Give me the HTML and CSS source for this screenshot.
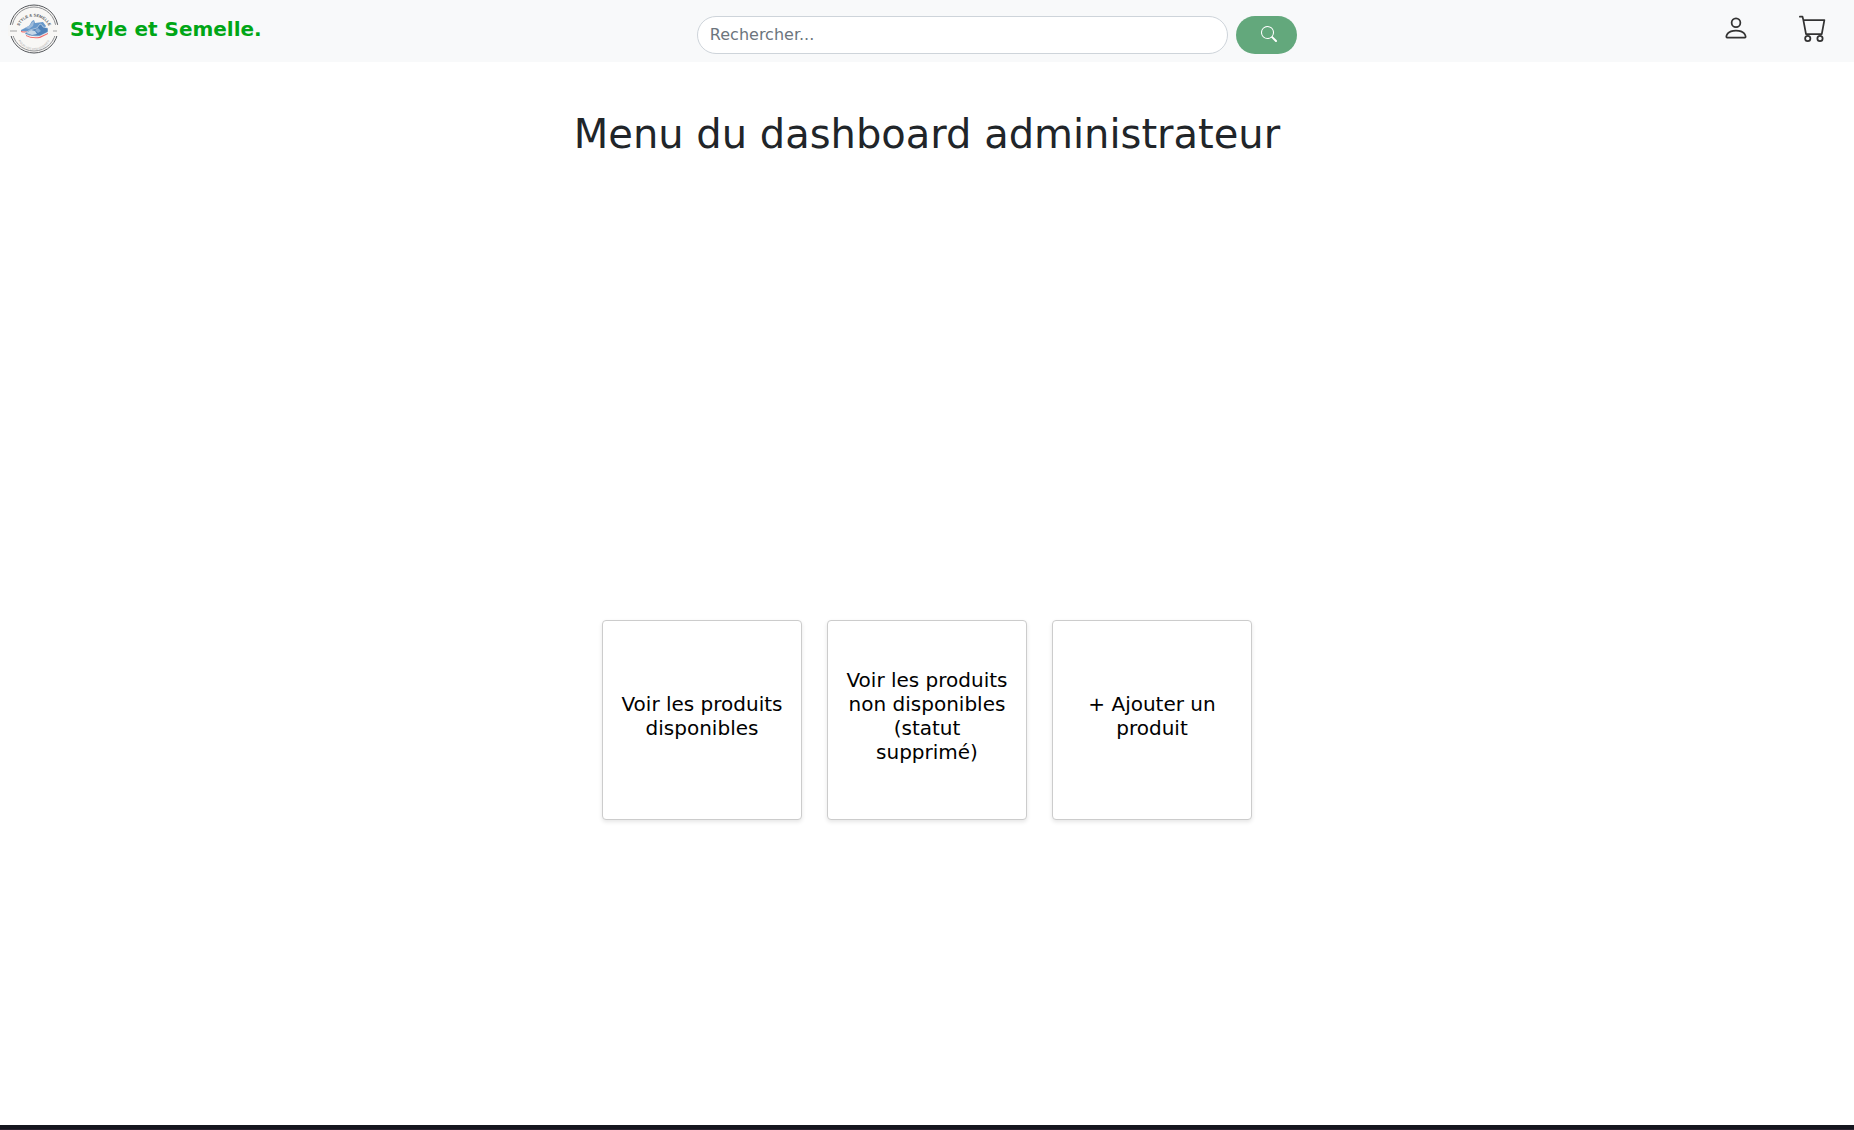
FILE: index.html
```html
<!DOCTYPE html>
<html lang="fr">
<head>
  <meta charset="utf-8">
  <meta name="viewport" content="width=device-width, initial-scale=1">
  <title>Style et Semelle</title>
  <link rel="stylesheet" href="styles.css">
</head>
<body>
  <header class="navbar">
    <a class="brand" href="#">
      <svg class="brand-logo" viewBox="0 0 52 52" aria-hidden="true">
        <circle cx="26" cy="26" r="24" fill="#f8f7f5" stroke="#55585c" stroke-width="1"/>
        <circle cx="26" cy="26" r="22" fill="none" stroke="#8e9093" stroke-width="1"/>
        <rect x="0" y="22" width="52" height="11" fill="#f8f7f5"/>
        <path id="arc-top" d="M11 24a16 16 0 0 1 30 0" fill="none"/>
        <path id="arc-bottom" d="M8 29a18 18 0 0 0 36 0" fill="none"/>
        <text class="logo-name"><textPath href="#arc-top" startOffset="50%">STYLE &amp; SEMELLE</textPath></text>
        <text class="logo-motto"><textPath href="#arc-bottom" startOffset="50%">POUR VOS CHAUSSURES</textPath></text>
        <path d="M2 28h7M45 28h4" stroke="#a5a5a5" stroke-width="1"/>
        <path d="M13 27l8-4 3-5 2-1 1 3 8-1 3 4-2 3-14 3-9-1z" fill="#6898ca"/>
        <path d="M17 25l5-3 3-4 1 1-1 4-4 3z" fill="#9dbbdb"/>
        <path d="M13 28q5 1 9 0v1q-6 1-9 0z" fill="#ee6a6b"/>
        <path d="M17 30l5-3 7-2 3-4 2 1 1 2 5 1v4l-8 4q-9 1-15-2z" fill="#4f82b9" stroke="#f8f7f5" stroke-width=".5"/>
        <path d="M18 30l5-3 4 1 2 3-5 1z" fill="#c6d7e8"/>
        <path d="M27 27l3-2 3 3-3 2z" fill="#86abd3"/>
        <path d="M18 32q5 3 13 2l9-4v1l-8 4q-9 1-14-2z" fill="#ee6a6b"/>
      </svg>
      <span>Style et Semelle.</span>
    </a>
    <form class="search" role="search">
      <input class="search-input" type="search" placeholder="Rechercher..." aria-label="Rechercher">
      <button class="search-button" type="submit" aria-label="Lancer la recherche">
        <svg width="16" height="16" viewBox="0 0 16 16" fill="currentColor" aria-hidden="true"><path d="M11.742 10.344a6.500 6.500 0 1 0-1.397 1.398h-.001q.044.060.098.115l3.850 3.850a1 1 0 0 0 1.415-1.414l-3.850-3.850a1 1 0 0 0-.115-.100zM12 6.500a5.500 5.500 0 1 1-11 0 5.500 5.500 0 0 1 11 0"/></svg>
      </button>
    </form>
    <nav class="actions" aria-label="Compte et panier">
      <a href="#" aria-label="Mon compte">
        <svg width="28" height="28" viewBox="0 0 16 16" fill="currentColor" aria-hidden="true"><path d="M8 8a3 3 0 1 0 0-6 3 3 0 0 0 0 6m2-3a2 2 0 1 1-4 0 2 2 0 0 1 4 0m4 8c0 1-1 1-1 1H3s-1 0-1-1 1-4 6-4 6 3 6 4m-1-.004c-.001-.246-.154-.986-.832-1.664C11.516 10.680 10.289 10 8 10s-3.516.680-4.168 1.332c-.678.678-.830 1.418-.832 1.664z"/></svg>
      </a>
      <a href="#" aria-label="Panier">
        <svg width="28" height="28" viewBox="0 0 16 16" fill="currentColor" aria-hidden="true"><path d="M0 1.500A.5.500 0 0 1 .5 1H2a.5.500 0 0 1 .485.379L2.890 3H14.500a.5.500 0 0 1 .491.592l-1.500 8A.5.500 0 0 1 13 12H4a.5.500 0 0 1-.491-.408L2.010 3.607 1.610 2H.5a.5.500 0 0 1-.5-.5M3.102 4l1.313 7h8.170l1.313-7zM5 12a2 2 0 1 0 0 4 2 2 0 0 0 0-4m7 0a2 2 0 1 0 0 4 2 2 0 0 0 0-4m-7 1a1 1 0 1 1 0 2 1 1 0 0 1 0-2m7 0a1 1 0 1 1 0 2 1 1 0 0 1 0-2"/></svg>
      </a>
    </nav>
  </header>
  <main class="dashboard">
    <h1>Menu du dashboard administrateur</h1>
    <div class="menu">
      <button class="card" type="button">Voir les produits disponibles</button>
      <button class="card" type="button">Voir les produits non disponibles (statut supprimé)</button>
      <button class="card" type="button">+ Ajouter un produit</button>
    </div>
  </main>
  <footer class="bottom-bar"></footer>
</body>
</html>
```
FILE: styles.css
```css
* {
  box-sizing: border-box;
}

body {
  margin: 0;
  min-height: 100vh;
  display: flex;
  flex-direction: column;
  background: #fff;
  color: #212529;
  font: 16px/24px "DejaVu Sans", sans-serif;
}

.navbar {
  display: flex;
  justify-content: space-between;
  height: 62px;
  padding: 0 27px 0 8px;
  background: #f8f9fa;
}

.brand {
  display: flex;
  align-items: center;
  gap: 10px;
  height: 58px;
  padding-right: 10px;
  color: #00a616;
  font-size: 20px;
  font-weight: 700;
  text-decoration: none;
}

.brand-logo {
  width: 52px;
  height: 52px;
}

.logo-name,
.logo-motto {
  fill: #55585c;
  font-family: "Liberation Sans", sans-serif;
  font-size: 4px;
  font-weight: 700;
  text-anchor: middle;
}

.logo-motto {
  fill: #aaa;
  font-size: 3px;
  font-weight: 400;
}

.search {
  display: flex;
  align-self: end;
  gap: 8px;
  width: 600px;
  margin-bottom: 8px;
}

.search-input {
  flex: 1;
  min-width: 0;
  height: 38px;
  padding: 0 12px 2px;
  border: 1px solid #ced4da;
  border-radius: 20px;
  background: #fff;
  color: #212529;
  font: inherit;
  appearance: none;
}

.search-input::placeholder {
  color: #6c757d;
  opacity: 1;
}

.search-button {
  display: flex;
  align-items: center;
  height: 38px;
  padding: 0 20px 2px 25px;
  border: 0;
  border-radius: 20px;
  background: #63a87c;
  color: #fff;
}

.actions {
  display: flex;
  align-items: center;
  gap: 49px;
  height: 56px;
}

.actions a {
  display: flex;
  color: #333;
}

.dashboard {
  flex: 1;
  display: flex;
  flex-direction: column;
  align-items: center;
}

h1 {
  margin: 48px 0 0;
  font-size: 40px;
  font-weight: 400;
  line-height: 48px;
}

.menu {
  flex: 1;
  display: flex;
  align-items: center;
  justify-content: space-between;
  width: 35%;
  min-width: 650px;
  padding-top: 156px;
}

.card {
  width: 200px;
  height: 200px;
  padding: 12px 16px 20px;
  border: 1px solid #ccc;
  border-radius: 4px;
  background: #fff;
  box-shadow: 0 2px 4px rgba(0, 0, 0, 0.1);
  color: #000;
  font: 20px/24px "DejaVu Sans", sans-serif;
}

.bottom-bar {
  height: 5px;
  border-bottom: 1px solid #2a2230;
  background: #15161e;
}
```
